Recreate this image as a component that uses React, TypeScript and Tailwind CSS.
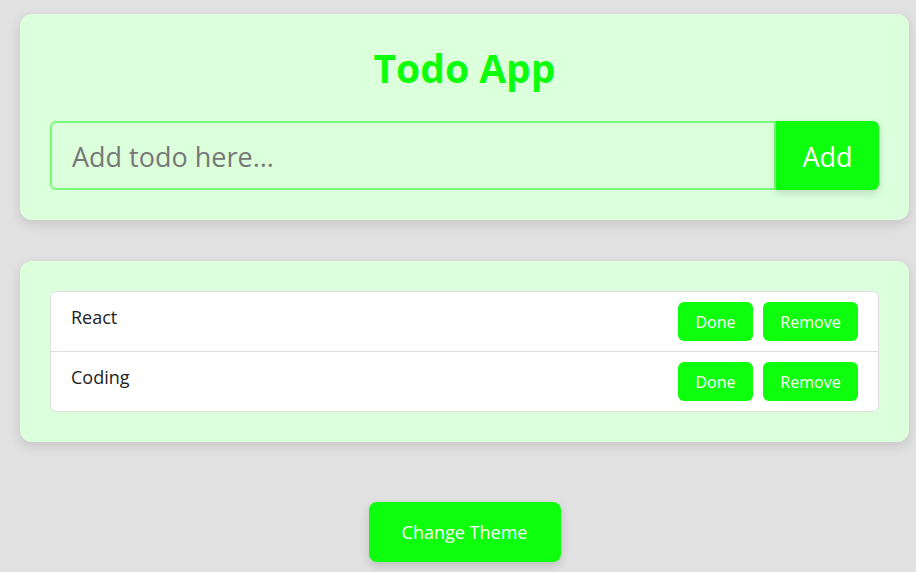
import { useState } from 'react'

const font = { fontFamily: '"Open Sans", "Noto Sans", sans-serif' }

interface Todo {
  id: number
  text: string
  done: boolean
}

export default function App() {
  const [todos, setTodos] = useState<Todo[]>([
    { id: 1, text: 'React', done: false },
    { id: 2, text: 'Coding', done: false },
  ])
  const [value, setValue] = useState('')

  const add = () => {
    if (!value.trim()) return
    setTodos([...todos, { id: Date.now(), text: value, done: false }])
    setValue('')
  }

  return (
    <div style={font} className="min-h-[572px] bg-[#e1e1e1] pt-[14px]">
      <div className="ml-[20px] flex w-[889px] flex-col">
        <div className="rounded-xl bg-[#dcffdc] px-[30px] pt-[28px] pb-[30px] shadow-[0_4px_12px_rgba(0,0,0,0.12)]">
          <h1 className="text-center text-[39px] leading-[52px] font-bold text-[#0dff0d]">Todo App</h1>
          <div className="mt-[27px] flex h-[69px]">
            <input
              value={value}
              onChange={(e) => setValue(e.target.value)}
              placeholder="Add todo here..."
              className="min-w-0 flex-1 rounded-l-md border-2 border-[#78fb78] bg-[#dcffdc] px-[20px] pt-[3px] text-[27px] text-[#333] outline-none placeholder:text-[#777]"
            />
            <button
              onClick={add}
              className="w-[103px] rounded-r-md bg-[#0dff0d] pt-[4px] text-[27px] text-white shadow-[0_3px_8px_rgba(0,0,0,0.15)]"
            >
              Add
            </button>
          </div>
        </div>

        <div className="mt-[41px] rounded-xl bg-[#dcffdc] p-[30px] shadow-[0_4px_12px_rgba(0,0,0,0.12)]">
          <ul className="rounded-md border border-[#dedede] bg-white">
            {todos.map((t, i) => (
              <li
                key={t.id}
                className={`flex items-start justify-between pr-[20px] pl-[20px] ${i > 0 ? 'h-[60px] border-t border-[#dedede]' : 'h-[59px]'}`}
              >
                <span className={`pt-[12px] text-[18px] text-[#222] ${t.done ? 'line-through' : ''}`}>{t.text}</span>
                <div className="flex gap-[10px] pt-[10px]">
                  <button
                    onClick={() => setTodos(todos.map((x) => (x.id === t.id ? { ...x, done: !x.done } : x)))}
                    className="h-[39px] w-[75px] rounded-md bg-[#0dff0d] text-[16px] text-white"
                  >
                    Done
                  </button>
                  <button
                    onClick={() => setTodos(todos.filter((x) => x.id !== t.id))}
                    className="h-[39px] w-[95px] rounded-md bg-[#0dff0d] text-[16px] text-white"
                  >
                    Remove
                  </button>
                </div>
              </li>
            ))}
          </ul>
        </div>

        <div className="mt-[60px] flex justify-center">
          <button className="h-[60px] w-[192px] rounded-lg bg-[#0dff0d] text-[18px] text-white shadow-[0_4px_10px_rgba(0,0,0,0.15)]">
            Change Theme
          </button>
        </div>
      </div>
    </div>
  )
}
